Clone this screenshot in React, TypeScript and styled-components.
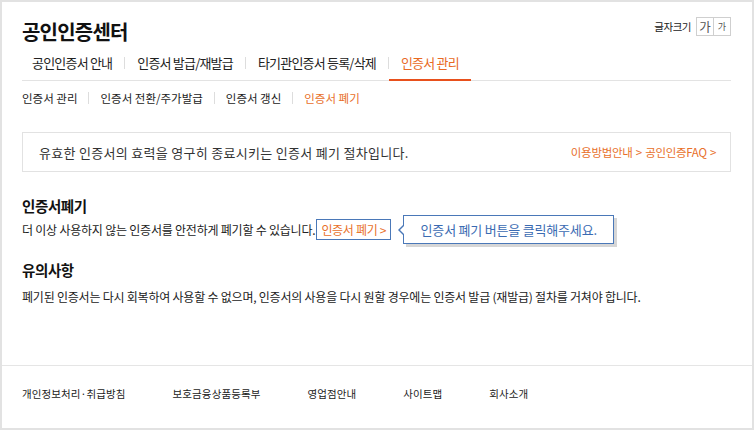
import { Fragment } from 'react';
import styled, { createGlobalStyle } from 'styled-components';

const GlobalStyle = createGlobalStyle`
  html, body {
    margin: 0;
    padding: 0;
    background: #fff;
  }
  body {
    font-family: "Noto Sans CJK KR", "Noto Sans", sans-serif;
    color: #333;
  }
`;

const Frame = styled.div`
  box-sizing: border-box;
  width: 754px;
  height: 430px;
  border: 2px solid #e2e2e2;
  display: flex;
  flex-direction: column;
`;

const Main = styled.div`
  padding: 0 21px 0 20px;
  flex: 1;
`;

const Header = styled.div`
  display: flex;
  justify-content: space-between;
  align-items: flex-start;
  height: 44px;
`;

const Title = styled.h1`
  margin: 18px 0 0;
  font-size: 20px;
  line-height: 24px;
  font-weight: 700;
  letter-spacing: -0.8px;
  color: #111;
`;

const FontSize = styled.div`
  display: flex;
  align-items: center;
  margin-top: 15px;
  font-size: 10.5px;
  letter-spacing: -0.5px;
  color: #222;
`;

const SizeButton = styled.button<{ $big?: boolean }>`
  box-sizing: border-box;
  width: 18px;
  height: 19px;
  padding: 0;
  margin-left: ${(p) => (p.$big ? '5px' : '-1px')};
  border: 1px solid #cfcfcf;
  background: #fff;
  color: #555;
  font-family: inherit;
  font-size: ${(p) => (p.$big ? '12.5px' : '9px')};
  line-height: 17px;
`;

const Tabs = styled.nav`
  display: flex;
  align-items: stretch;
  height: 34px;
  border-bottom: 1px solid #e3e3e3;
`;

const Tab = styled.a<{ $active?: boolean }>`
  display: flex;
  align-items: center;
  padding: 0 12px;
  margin-bottom: -1px;
  font-size: 13px;
  letter-spacing: -0.8px;
  color: ${(p) => (p.$active ? '#e86a24' : '#222')};
  border-bottom: 2px solid ${(p) => (p.$active ? '#e8501c' : 'transparent')};
  &:first-child {
    padding-left: 10px;
  }
`;

const Divider = styled.span`
  align-self: center;
  width: 1px;
  height: 12px;
  background: #ddd;
`;

const SubNav = styled.nav`
  display: flex;
  align-items: center;
  height: 33px;
`;

const SubItem = styled.a<{ $active?: boolean }>`
  padding: 0 11px;
  font-size: 11.5px;
  letter-spacing: 0;
  color: ${(p) => (p.$active ? '#e8702a' : '#222')};
  &:first-child {
    padding-left: 0;
  }
`;

const InfoBox = styled.div`
  box-sizing: border-box;
  display: flex;
  justify-content: space-between;
  align-items: center;
  height: 40px;
  margin-top: 18px;
  padding: 0 14px 0 16px;
  border: 1px solid #e2e2e2;
`;

const InfoText = styled.p`
  margin: 0;
  font-size: 13px;
  letter-spacing: 0.3px;
  color: #333;
`;

const InfoLinks = styled.a`
  font-size: 11.5px;
  letter-spacing: -0.3px;
  word-spacing: 1px;
  color: #e8702a;
`;

const SectionTitle = styled.h2<{ $top: number }>`
  margin: ${(p) => p.$top}px 0 0;
  font-size: 14.5px;
  line-height: 20px;
  font-weight: 700;
  letter-spacing: -0.4px;
  color: #111;
`;

const ActionRow = styled.div`
  display: flex;
  align-items: center;
  margin-top: -1px;
`;

const Body = styled.p<{ $top?: number }>`
  margin: ${(p) => p.$top ?? 0}px 0 0;
  font-size: 12px;
  line-height: 17px;
  letter-spacing: -0.22px;
  color: #222;
`;

const RevokeButton = styled.button`
  box-sizing: border-box;
  height: 21px;
  margin-left: 1px;
  padding: 0 4px;
  border: 1px solid #4a78b8;
  background: #fff;
  color: #e8702a;
  font-family: inherit;
  font-size: 12px;
  letter-spacing: -0.3px;
`;

const Tooltip = styled.div`
  position: relative;
  box-sizing: border-box;
  width: 211px;
  height: 29px;
  margin-left: 12px;
  display: flex;
  align-items: center;
  justify-content: center;
  border: 1px solid #4a78b8;
  background: #fff;
  box-shadow: 3px 3px 0 #d6d6d6;
  color: #3b6bb2;
  font-size: 13px;
  letter-spacing: -0.2px;

  &::before,
  &::after {
    content: '';
    position: absolute;
    top: 50%;
    width: 0;
    height: 0;
    border-style: solid;
  }
  &::before {
    left: -6px;
    margin-top: -6px;
    border-width: 6px 6px 6px 0;
    border-color: transparent #4a78b8 transparent transparent;
  }
  &::after {
    left: -4px;
    margin-top: -5px;
    border-width: 5px 5px 5px 0;
    border-color: transparent #fff transparent transparent;
  }
`;

const Footer = styled.footer`
  box-sizing: border-box;
  display: flex;
  align-items: center;
  gap: 47px;
  height: 63px;
  padding: 0 20px 7px;
  border-top: 1px solid #e5e5e5;
`;

const FooterLink = styled.a`
  font-size: 10.5px;
  letter-spacing: 0.1px;
  color: #222;
`;

const tabs = ['공인인증서 안내', '인증서 발급/재발급', '타기관인증서 등록/삭제', '인증서 관리'];
const subs = ['인증서 관리', '인증서 전환/주가발급', '인증서 갱신', '인증서 폐기'];
const footerLinks = ['개인정보처리·취급방침', '보호금융상품등록부', '영업점안내', '사이트맵', '회사소개'];

function App() {
  return (
    <>
      <GlobalStyle />
      <Frame>
        <Main>
          <Header>
            <Title>공인인증센터</Title>
            <FontSize>
              글자크기
              <SizeButton $big>가</SizeButton>
              <SizeButton>가</SizeButton>
            </FontSize>
          </Header>

          <Tabs>
            {tabs.map((t, i) => (
              <Fragment key={t}>
                {i > 0 && <Divider />}
                <Tab $active={i === tabs.length - 1}>{t}</Tab>
              </Fragment>
            ))}
          </Tabs>

          <SubNav>
            {subs.map((s, i) => (
              <Fragment key={s}>
                {i > 0 && <Divider />}
                <SubItem $active={i === subs.length - 1}>{s}</SubItem>
              </Fragment>
            ))}
          </SubNav>

          <InfoBox>
            <InfoText>유효한 인증서의 효력을 영구히 종료시키는 인증서 폐기 절차입니다.</InfoText>
            <InfoLinks>이용방법안내 &gt; 공인인증FAQ &gt;</InfoLinks>
          </InfoBox>

          <SectionTitle $top={24}>인증서폐기</SectionTitle>
          <ActionRow>
            <Body>더 이상 사용하지 않는 인증서를 안전하게 폐기할 수 있습니다.</Body>
            <RevokeButton>인증서 폐기 &gt;</RevokeButton>
            <Tooltip>인증서 폐기 버튼을 클릭해주세요.</Tooltip>
          </ActionRow>

          <SectionTitle $top={16}>유의사항</SectionTitle>
          <Body $top={8}>
            폐기된 인증서는 다시 회복하여 사용할 수 없으며, 인증서의 사용을 다시 원할 경우에는 인증서 발급 (재발급) 절차를 거쳐야 합니다.
          </Body>
        </Main>

        <Footer>
          {footerLinks.map((f) => (
            <FooterLink key={f}>{f}</FooterLink>
          ))}
        </Footer>
      </Frame>
    </>
  );
}

export default App;
